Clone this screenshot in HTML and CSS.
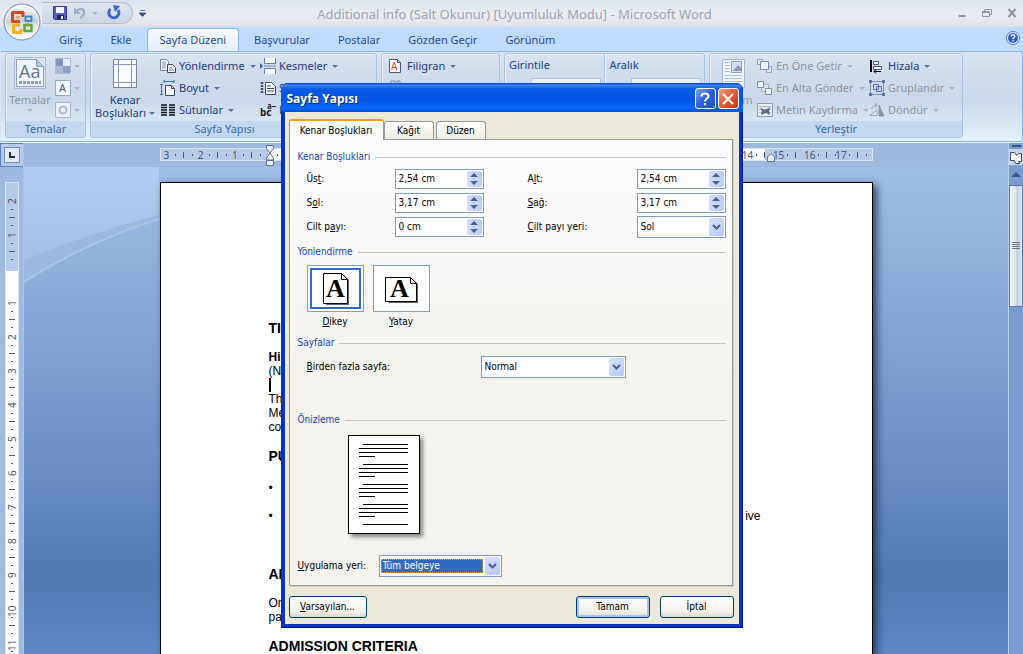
FILE: index.html
```html
<!DOCTYPE html>
<html lang="tr">
<head>
<meta charset="utf-8">
<title>Additional info - Microsoft Word</title>
<link rel="stylesheet" href="styles.css">
</head>
<body>
<div class="app">
  <header class="titlebar">
    <button class="orb" aria-label="Office">
      <svg viewBox="0 0 38 38" width="38" height="38">
        <defs>
          <linearGradient id="orbFill" x1="0" y1="0" x2="0" y2="1"><stop offset="0" stop-color="#fdfdfd"/><stop offset=".5" stop-color="#c9ced8"/><stop offset=".55" stop-color="#d9dde4"/><stop offset="1" stop-color="#fff"/></linearGradient>
        </defs>
        <circle cx="19" cy="19" r="18" fill="url(#orbFill)" stroke="#7e8ba3"/>
        <circle cx="19" cy="19" r="16.5" fill="none" stroke="#fff" opacity=".8"/>
        <g fill="none" stroke-linejoin="round">
          <path d="M17 18.500H9.500V9.500H20V14" stroke="#d8461b" stroke-width="3"/>
          <path d="M22.500 13.500h6v4.500h-6z" stroke="#3a8bd0" stroke-width="2"/>
          <path d="M17 22h-6.500v7.500H18V26" stroke="#f2b21c" stroke-width="3"/>
          <path d="M21.500 22h7v6h-7z" stroke="#5fa63a" stroke-width="2.500"/>
        </g>
        <path d="M15 14v5M12.500 14h5M25 20v4" stroke="#e9872f" stroke-width="1"/>
      </svg>
    </button>
    <div class="quick">
      <button class="tool" aria-label="Kaydet"><svg viewBox="0 0 16 16" width="16" height="16"><path d="M1.500 1.500h13v13h-12l-1-1z" fill="#5a5fc4" stroke="#30358c"/><path d="M4 2h8v6H4z" fill="#f4f6ff"/><path d="M5 10h7v4H5z" fill="#20265e"/><path d="M9 11h2v3H9z" fill="#fff"/></svg></button>
      <button class="tool" aria-label="Geri Al"><svg viewBox="0 0 16 16" width="16" height="16"><path d="M4 6.500C8 2 12.500 4 12 8c0 2-2 4-4 5" fill="none" stroke="#a3b0ca" stroke-width="2.500"/><path d="M2 2v7h7z" fill="#a3b0ca"/></svg></button>
      <i class="caret dim"></i>
      <button class="tool redo" aria-label="Yinele"><svg viewBox="0 0 16 16" width="16" height="16"><path d="M4.500 4A5 5 0 1 0 12 5" fill="none" stroke="#3b67c5" stroke-width="3"/><path d="M7 0l7 1-5 6z" fill="#3b67c5"/></svg></button>
    </div>
    <button class="more" aria-label="Özelleştir"><svg viewBox="0 0 7 7" width="7" height="7"><path d="M1 .5h5M0 3h7L3.500 6.500z" stroke="#3b4f86" fill="#3b4f86" stroke-width=".8"/></svg></button>
    <h1 class="doc-title">Additional info (Salt Okunur) [Uyumluluk Modu] - Microsoft Word</h1>
    <div class="window-buttons">
      <button aria-label="Simge durumuna küçült"><svg viewBox="0 0 10 10" width="10" height="10"><path d="M1.500 8h7" stroke="#8f949e" stroke-width="2"/></svg></button>
      <button aria-label="Önceki boyut"><svg viewBox="0 0 10 10" width="10" height="10"><path d="M2.500 3V1.500h7v5H8M.5 3.500h7v5h-7zM.5 4.500h7" stroke="#8f949e" fill="none"/></svg></button>
      <button aria-label="Kapat"><svg viewBox="0 0 10 10" width="10" height="10"><path d="M1.500 1l7 8M8.500 1l-7 8" stroke="#8f949e" stroke-width="2"/></svg></button>
    </div>
  </header>

  <nav class="tabs">
    <button class="tab">Giriş</button>
    <button class="tab">Ekle</button>
    <button class="tab active">Sayfa Düzeni</button>
    <button class="tab">Başvurular</button>
    <button class="tab">Postalar</button>
    <button class="tab">Gözden Geçir</button>
    <button class="tab">Görünüm</button>
    <button class="help" aria-label="Yardım"><svg viewBox="0 0 14 14" width="14" height="14"><circle cx="7" cy="7" r="6.500" fill="#e8f1ff" stroke="#4a78c8"/><circle cx="7" cy="7" r="5" fill="#2c62c9"/><path d="M5.200 5.500c0-2.300 3.600-2.200 3.600-.2C8.800 6.600 7 6.600 7 8.300M7 9.300v1.300" stroke="#fff" stroke-width="1.400" fill="none"/></svg></button>
  </nav>

  <div class="ribbon">
    <section class="group g-themes">
      <div class="tools">
        <button class="big dim">
          <svg viewBox="0 0 32 32" width="32" height="32"><path d="M.5.500h31v31H.5z" fill="#d9e4f2" stroke="#a9bcd6"/><path d="M2.500 2.500h20l7 7v20h-27z" fill="#f1f6fc" stroke="#8ba3c5"/><path d="M22.500 2.500v7h7z" fill="#b3c4dc" stroke="#8ba3c5"/><text x="5" y="21" class="serif-glyph" font-size="18">Aa</text><path d="M5 25.500h22" stroke="#8c9dba" stroke-width="3" stroke-dasharray="3 1"/></svg>
          <span>Temalar</span><i class="caret"></i>
        </button>
        <div class="stack mini">
          <button class="row dim" aria-label="Renkler"><svg viewBox="0 0 16 16" width="16" height="16"><path d="M0 0h16v16H0z" fill="#a9bbd8"/><path d="M1 1h7v7H1z" fill="#7f93bc"/><path d="M8 1h7v7H8z" fill="#e8effa"/><path d="M8 8h7v7H8z" fill="#8b9fc4"/></svg><i class="caret"></i></button>
          <button class="row dim" aria-label="Yazı Tipleri"><svg viewBox="0 0 16 16" width="16" height="16"><path d="M.5.500h15v15H.5z" fill="#f3f7fc" stroke="#95a9ca"/><text x="4" y="12" font-size="11" fill="#4c5974">A</text></svg><i class="caret"></i></button>
          <button class="row dim" aria-label="Efektler"><svg viewBox="0 0 16 16" width="16" height="16"><path d="M.5.500h15v15H.5z" fill="#edf2f9" stroke="#a5b7d2"/><circle cx="8" cy="8" r="3.500" fill="#e9eef6" stroke="#aebbd3" stroke-width="2"/></svg><i class="caret"></i></button>
        </div>
      </div>
      <h2>Temalar</h2>
    </section>

    <section class="group g-page launcher">
      <div class="tools">
        <button class="big">
          <svg viewBox="0 0 32 32" width="32" height="32"><path d="M4.500 2.500h23v28h-23z" fill="#f9fbff" stroke="#7083a5"/><path d="M9.500 3v27M22.500 3v27M5 7.500h22M5 25.500h22" stroke="#8c98b1" fill="none"/></svg>
          <span>Kenar</span><span>Boşlukları <i class="caret"></i></span>
        </button>
        <div class="stack col-a">
          <button class="row"><svg viewBox="0 0 16 16" width="16" height="16"><path d="M.5 1.500h6l2 2v9h-8z" fill="#f5f7fb" stroke="#75829b"/><path d="M2 4h4M2 6h4M2 8h4M2 10h4" stroke="#8c97ab"/><path d="M7.500 6.500h5l3 3v5h-8z" fill="#fff" stroke="#3a4765"/><path d="M9 10h4M9 12h5" stroke="#75829b"/></svg>Yönlendirme<i class="caret"></i></button>
          <button class="row"><svg viewBox="0 0 16 16" width="16" height="16"><path d="M4 1.500h10M4 0v3M14 0v3M1.500 4v11M0 4.500h3M0 14.500h3" stroke="#3d68b4"/><path d="M5.500 5.500h6l3 3v7h-9z" fill="#fff" stroke="#3a4765"/><path d="M11.500 5.500v3h3" fill="none" stroke="#3a4765"/></svg>Boyut<i class="caret"></i></button>
          <button class="row"><svg viewBox="0 0 16 16" width="16" height="16"><path d="M1 3h6M1 5.500h6M1 8h6M1 10.500h6M1 13h6M9 3h6M9 5.500h6M9 8h6M9 10.500h6M9 13h6" stroke="#10131c" stroke-width="1.500"/></svg>Sütunlar<i class="caret"></i></button>
        </div>
        <div class="stack col-b">
          <button class="row"><svg viewBox="0 0 16 16" width="16" height="16"><path d="M4.500 0v5.500h11V0M4.500 16v-5.500h11V16" fill="#fff" stroke="#6a7a98"/><path d="M4 8h12" stroke="#7b88a2"/><path d="M0 5v6l3-3z" fill="#2f62b6"/></svg>Kesmeler<i class="caret"></i></button>
          <button class="row"><svg viewBox="0 0 16 16" width="16" height="16"><path d="M2 2v12" stroke="#3d4a68" stroke-width="2.500" stroke-dasharray="2 1"/><path d="M5.500 2.500h6l4 4v8h-10z" fill="#fff" stroke="#3a4765"/><path d="M7 6h4M7 8.500h7M7 11h7" stroke="#3a4765"/></svg>S</button>
          <button class="row"><svg viewBox="0 0 16 16" width="16" height="16"><text x="0" y="14" font-size="10" class="bold-glyph">bc</text><text x="7" y="7" font-size="8" class="bold-glyph">a</text><path d="M12 4.500h4" stroke="#222"/></svg>H</button>
        </div>
      </div>
      <h2>Sayfa Yapısı</h2>
    </section>

    <section class="group g-back">
      <div class="tools">
        <div class="stack">
          <button class="row wide"><svg viewBox="0 0 16 16" width="16" height="16"><path d="M1.500 1.500h8l3 3v10h-11z" fill="#fff" stroke="#4c5873"/><path d="M9.500 1.500v3h3" fill="none" stroke="#4c5873"/><text x="3" y="12" font-size="10" fill="#d43a32">A</text></svg>Filigran<i class="caret"></i></button>
          <button class="row wide" aria-label="Sayfa Rengi"><svg viewBox="0 0 16 16" width="16" height="16"><path d="M3 1h4v4H3zM9 1h3v5H9z" fill="none" stroke="#7d879b"/></svg></button>
        </div>
      </div>
      <h2></h2>
    </section>

    <section class="group g-para">
      <div class="tools">
        <div class="measure"><span>Girintile</span><input aria-label="Girintile"></div>
        <div class="measure split"><span>Aralık</span><input aria-label="Aralık"></div>
      </div>
      <h2></h2>
    </section>

    <section class="group g-arrange">
      <div class="tools">
        <button class="big dim">
          <svg viewBox="0 0 32 32" width="32" height="32"><path d="M4.500 2.500h22v28h-22z" fill="#f0f5fb" stroke="#a6b7d0"/><path d="M7 5.500h5M7 8.500h5M7 11.500h5M7 14.500h5M7 18.500h17M7 21.500h17M7 24.500h17" stroke="#b1bfd5"/><path d="M13.500 4.500h10v11h-10z" fill="#d6e1f0" stroke="#8ea1c1"/><path d="M15 14l5-6 3 3v3z" fill="#8497b9"/></svg>
          <span>Konum</span>
        </button>
        <div class="stack col-c">
          <button class="row dim"><svg viewBox="0 0 16 16" width="16" height="16"><path d="M.5 1.500h5v5h-5zM9.500 8.500h5v6h-5z" fill="#dfe6f0" stroke="#98a4ba"/><path d="M3.500 3.500h8v8h-8z" fill="#f0f4fa" stroke="#7e8ba5"/></svg>En Öne Getir<i class="caret"></i></button>
          <button class="row dim"><svg viewBox="0 0 16 16" width="16" height="16"><path d="M4.500 4.500h7v7h-7z" fill="#dfe6f0" stroke="#a3aec2"/><path d="M.5 1.500h6v6h-6zM8.500 8.500h6v6h-6z" fill="#f0f4fa" stroke="#7e8ba5"/></svg>En Alta Gönder<i class="caret"></i></button>
          <button class="row dim"><svg viewBox="0 0 16 16" width="16" height="16"><path d="M.5 1.500h15v13H.5z" fill="#e9eff7" stroke="#8f9bb2"/><path d="M2 4.500h12M2 7.500h12M2 10.500h12" stroke="#a9b5c9"/><path d="M3 5l4 3 3-1 3-2-1 4 1 4-4-2-5 2 1-4z" fill="#5b6a86"/></svg>Metin Kaydırma<i class="caret"></i></button>
        </div>
        <div class="stack">
          <button class="row"><svg viewBox="0 0 16 16" width="16" height="16"><path d="M2 2v12" stroke="#000" stroke-width="2"/><path d="M4.500 3.500h5v3h-5zM4.500 8.500h8v3h-8z" fill="#fff" stroke="#4a5570"/><path d="M12 13.500H5M7 11.500l-2 2 2 2" stroke="#000" fill="none"/></svg>Hizala<i class="caret"></i></button>
          <button class="row dim"><svg viewBox="0 0 16 16" width="16" height="16"><path d="M1.500 1.500h13v13h-13z" fill="none" stroke="#8493b0"/><path d="M4.500 4.500h5v5h-5zM7.500 6.500h5v5h-5z" fill="none" stroke="#5d74a3"/><path d="M0 0h3v3H0zM13 0h3v3h-3zM0 13h3v3H0zM13 13h3v3h-3z" fill="#5d74a3"/></svg>Gruplandır<i class="caret"></i></button>
          <button class="row dim"><svg viewBox="0 0 16 16" width="16" height="16"><path d="M1 13.500h7V8z" fill="#e4eaf3" stroke="#97a4bc"/><path d="M10 3v11h5z" fill="#8b98b0" stroke="#8b98b0"/><path d="M3 7c0-3 1-4 5-4M6 1l2 2-2 2" fill="none" stroke="#8b98b0"/></svg>Döndür<i class="caret"></i></button>
        </div>
      </div>
      <h2>Yerleştir</h2>
    </section>
  </div>

  <main class="workspace">
    <aside class="left-rail">
      <button class="tab-stop" aria-label="Sekme"><svg viewBox="0 0 16 16" width="16" height="16"><path d="M.5.500h15v15H.5z" fill="#e3edfa" stroke="#6d8cc0"/><path d="M6 5v5h5" fill="none" stroke="#1d2f5c" stroke-width="2"/></svg></button>
      <ol class="v-ruler">
        <li>2</li><li>1</li><li></li><li>1</li><li>2</li><li>3</li><li>4</li><li>5</li><li>6</li><li>7</li><li>8</li><li>9</li><li>10</li><li>11</li>
      </ol>
    </aside>

    <div class="center">
      <div class="h-band">
        <ol class="h-ruler">
          <li>3</li><li>2</li><li>1</li><li class="origin"><svg viewBox="0 0 10 22" width="10" height="22"><path d="M1.500.500h7v3L5 8 1.500 3.500zM5 8l3.500 5v2h-7v-2zM1.500 15.500h7v5h-7z" fill="#e9f1fc" stroke="#5c6f94"/></svg></li><li></li><li></li><li></li><li></li><li></li><li></li><li></li><li></li><li></li><li></li><li></li><li></li><li></li><li class="edge">14<svg viewBox="0 0 10 10" width="10" height="10"><path d="M1.500 9.500V5L5 1.500 8.500 5v4.500z" fill="#e9f1fc" stroke="#5c6f94"/></svg></li><li>15</li><li>16</li><li>17</li>
        </ol>
      </div>
      <div class="canvas">
        <svg class="swoosh" viewBox="0 0 135 120" width="135" height="120" preserveAspectRatio="none">
          <defs>
            <linearGradient id="sky" x1="0" y1="0" x2="0" y2="1"><stop offset="0" stop-color="#b1cef0"/><stop offset="1" stop-color="#a2c0e8"/></linearGradient>
          </defs>
          <path d="M0 0h135v48Q60 68 0 94z" fill="url(#sky)"/>
          <path d="M0 94Q60 68 135 48v4Q60 76 0 115z" fill="#9bbae2"/>
          <path d="M0 115Q60 76 135 52" fill="none" stroke="#a9c5eb" stroke-width="2"/>
        </svg>
        <article class="page">
          <h3>TI</h3>
          <p class="gap-l"><b>Hi</b><br>(N</p>
          <div class="cursor"></div>
          <p>Th<br>Me<br>co</p>
          <h3 class="gap-l">PU</h3>
          <ul>
            <li><span></span></li>
            <li><span>ive</span></li>
          </ul>
          <h3>AI</h3>
          <p class="gap-l">On<br>pa</p>
          <h3 class="gap-l">ADMISSION CRITERIA</h3>
        </article>
      </div>
    </div>

    <aside class="scroll-rail">
      <div class="splitter"></div>
      <button class="view-ruler" aria-label="Cetvel"><svg viewBox="0 0 14 14" width="14" height="14"><path d="M1.500 2.500h4l2 3 2-2h3v8h-3l1 2h-4l-1-3h-4z" fill="#fff" stroke="#3c4660"/></svg></button>
      <button class="scroll-up" aria-label="Yukarı"><svg viewBox="0 0 10 6" width="10" height="6"><path d="M0 5l5-5 5 5z" fill="#3b568f"/></svg></button>
      <div class="thumb"><svg viewBox="0 0 8 8" width="8" height="8"><path d="M0 .5h8M0 2.500h8M0 4.500h8M0 6.500h8" stroke="#6b7a93"/></svg></div>
    </aside>
  </main>
</div>

<div class="dialog" role="dialog" aria-labelledby="dlg-title">
  <div class="dlg-title">
    <h2 id="dlg-title">Sayfa Yapısı</h2>
    <button class="cap-btn" aria-label="Yardım"><svg viewBox="0 0 14 14" width="14" height="14"><path d="M3.500 4.500C3.500.500 10.500.800 10.500 4.200 10.500 6.500 7 6.500 7 9.500M7 11v2.300" fill="none" stroke="#fff" stroke-width="2"/></svg></button>
    <button class="cap-btn close" aria-label="Kapat"><svg viewBox="0 0 14 14" width="14" height="14"><path d="M2 2l10 10M12 2L2 12" stroke="#fff" stroke-width="2.200"/></svg></button>
  </div>
  <form class="dlg-body">
    <div class="dlg-tabs">
      <button type="button" class="dlg-tab on">Kenar Boşlukları</button>
      <button type="button" class="dlg-tab">Kağıt</button>
      <button type="button" class="dlg-tab">Düzen</button>
    </div>
    <div class="panel">
      <h3 class="legend">Kenar Boşlukları</h3>
      <div class="fields">
        <label for="ust">Üs<u>t</u>:</label>
        <div class="spin"><input id="ust" value="2,54 cm"><span class="arrows"><button type="button" aria-label="Artır"></button><button type="button" class="down" aria-label="Azalt"></button></span></div>
        <label for="alt">A<u>l</u>t:</label>
        <div class="spin"><input id="alt" value="2,54 cm"><span class="arrows"><button type="button" aria-label="Artır"></button><button type="button" class="down" aria-label="Azalt"></button></span></div>
        <label for="sol">S<u>o</u>l:</label>
        <div class="spin"><input id="sol" value="3,17 cm"><span class="arrows"><button type="button" aria-label="Artır"></button><button type="button" class="down" aria-label="Azalt"></button></span></div>
        <label for="sag"><u>S</u>ağ:</label>
        <div class="spin"><input id="sag" value="3,17 cm"><span class="arrows"><button type="button" aria-label="Artır"></button><button type="button" class="down" aria-label="Azalt"></button></span></div>
        <label for="cilt">Cilt p<u>a</u>yı:</label>
        <div class="spin"><input id="cilt" value="0 cm"><span class="arrows"><button type="button" aria-label="Artır"></button><button type="button" class="down" aria-label="Azalt"></button></span></div>
        <label for="yer"><u>C</u>ilt payı yeri:</label>
        <div class="combo"><select id="yer"><option>Sol</option></select><span class="drop"><svg viewBox="0 0 9 6" width="9" height="6"><path d="M1 1l3.500 3.500L8 1" fill="none" stroke="#4d6185" stroke-width="2"/></svg></span></div>
      </div>

      <h3 class="legend">Yönlendirme</h3>
      <div class="orient">
        <button type="button" class="choice picked">
          <span class="frame"><svg viewBox="0 0 32 34" width="32" height="34"><path d="M7 3h18l5 5v25H7z" fill="#666"/><path d="M4.500 1.500h18l6 6v24h-24z" fill="#fff" stroke="#000"/><path d="M22.500 1.500v6h6" fill="none" stroke="#000"/><text x="7" y="25" font-size="26" class="letter">A</text></svg></span>
          <span><u>D</u>ikey</span>
        </button>
        <button type="button" class="choice">
          <span class="frame"><svg viewBox="0 0 34 34" width="34" height="34"><path d="M4 7h25l5 5v19H4z" fill="#666"/><path d="M1.500 5.500h25l6 6v18h-31z" fill="#fff" stroke="#000"/><path d="M26.500 5.500v6h6" fill="none" stroke="#000"/><text x="6" y="25" font-size="26" class="letter">A</text></svg></span>
          <span><u>Y</u>atay</span>
        </button>
      </div>

      <h3 class="legend">Sayfalar</h3>
      <div class="multi">
        <label for="multi"><u>B</u>irden fazla sayfa:</label>
        <div class="combo"><select id="multi"><option>Normal</option></select><span class="drop"><svg viewBox="0 0 9 6" width="9" height="6"><path d="M1 1l3.500 3.500L8 1" fill="none" stroke="#4d6185" stroke-width="2"/></svg></span></div>
      </div>

      <h3 class="legend">Önizleme</h3>
      <div class="preview">
        <svg viewBox="0 0 70 97" width="70" height="97"><path d="M14 8.500h45M10 12.500h49M10 16.500h49M10 20.500h16M14 28.500h45M10 32.500h49M10 36.500h49M10 40.500h16M14 48.500h45M10 52.500h49M10 56.500h49M10 60.500h16M14 68.500h45M10 72.500h49M10 76.500h49M10 80.500h16M14 88.500h45" stroke="#000"/></svg>
      </div>
      <div class="apply">
        <label for="apply"><u>U</u>ygulama yeri:</label>
        <div class="combo focused"><select id="apply"><option>Tüm belgeye</option></select><span class="drop"><svg viewBox="0 0 9 6" width="9" height="6"><path d="M1 1l3.500 3.500L8 1" fill="none" stroke="#4d6185" stroke-width="2"/></svg></span></div>
      </div>
    </div>
    <div class="dlg-foot">
      <button type="button" class="btn first"><u>V</u>arsayılan...</button>
      <button type="button" class="btn default">Tamam</button>
      <button type="button" class="btn">İptal</button>
    </div>
  </form>
</div>
</body>
</html>
```
FILE: styles.css
```css
* { box-sizing: border-box; }
body, h1, h2, h3, p, ul, ol { margin: 0; padding: 0; }
ol, ul { list-style: none; }
button, input, select { font: inherit; color: inherit; margin: 0; padding: 0; border: 0; background: none; }
svg { display: block; flex: none; }
body { overflow: hidden; font: 11px/14px "Noto Sans", "Open Sans", sans-serif; color: #15428b; }
.app { display: flex; flex-direction: column; height: 100vh; background: #bfdbff; }

/* Title bar */
.titlebar { position: relative; display: flex; align-items: center; height: 27px; padding: 0 6px 0 42px; background: linear-gradient(#dde4ee, #e9edf3 50%, #e1e5eb); border-bottom: 1px solid #d3deec; }
.orb { position: absolute; left: 3px; top: 3px; z-index: 2; }
.quick { display: flex; align-items: center; gap: 4px; height: 22px; padding: 0 10px; border: 1px solid #b3bfd1; border-left: 0; border-radius: 0 11px 11px 0; background: linear-gradient(#dfe7f2, #ccd6e4); }
.quick .redo { margin-left: 4px; }
.more { margin-left: 6px; }
.doc-title { flex: 1; text-align: center; font-weight: 400; font-size: 13px; line-height: 16px; color: #a0a4ab; padding: 2px 74px 0 0; white-space: nowrap; }
.window-buttons { display: flex; gap: 15px; }
.caret { display: inline-block; flex: none; width: 0; height: 0; border: 3px solid transparent; border-top-color: #5b6f9c; border-bottom: 0; }
.dim .caret, .caret.dim { border-top-color: #a9b3c5; }

/* Ribbon tabs */
.tabs { display: flex; align-items: flex-end; gap: 2px; height: 24px; padding: 0 3px 0 46px; background: #bfdbff; }
.tab { height: 23px; padding: 0 12px; color: #2b4a8c; border: 1px solid transparent; border-bottom: 0; }
.tab.active { background: linear-gradient(#f7fbff, #e3edf9); border-color: #8fb6e6; border-radius: 4px 4px 0 0; }
.help { margin: 0 0 6px auto; }

/* Ribbon */
.ribbon { display: flex; gap: 4px; height: 91px; padding: 1px 3px 3px 4px; border: 1px solid #8db2e3; border-left-color: #d7e6f8; border-radius: 3px; background: linear-gradient(#dbe6f4, #cfdded 20%, #c9d9ed 55%, #e2f3fc); box-shadow: 0 1px #e9fbff; }
.group { flex: none; display: flex; flex-direction: column; border: 1px solid #a9c3e2; border-radius: 3px; box-shadow: inset 1px 1px #e9f1fa; overflow: hidden; }
.g-themes { width: 81px; }
.g-page { width: 287px; }
.g-back { width: 119px; }
.g-para { width: 201px; }
.g-arrange { width: 254px; }
.group h2 { height: 16px; background: #c1d8f0; font-weight: 400; font-size: 11px; line-height: 16px; text-align: center; color: #3e6aaa; }
.launcher h2 { padding-right: 18px; }
.tools { flex: 1; display: flex; min-height: 0; padding-left: 3px; }
.big { display: flex; flex-direction: column; align-items: center; width: 42px; padding-top: 3px; line-height: 13px; color: #1e3a7a; }
.big svg { margin-bottom: 4px; }
.big span { white-space: nowrap; }
.big .caret { margin: 3px 0 0; }
.big span .caret { margin: 0; vertical-align: 2px; }
.big.dim { color: #8d93a1; }
.g-page .big { width: 62px; }
.stack { display: flex; flex-direction: column; padding-top: 1px; }
.row { display: flex; align-items: center; gap: 3px; height: 22px; color: #1e3a7a; white-space: nowrap; }
.row.dim { color: #8d93a1; }
.row .caret { margin-left: 2px; }
.mini { padding-left: 4px; }
.mini .row { gap: 1px; }
.col-a, .col-c { flex: none; }
.col-a { width: 98px; padding-left: 4px; }
.col-b { padding-left: 6px; }
.col-c { width: 114px; padding-left: 2px; }
.wide { gap: 3px; padding-left: 3px; }
.measure { display: flex; flex-direction: column; flex: 1; padding: 4px 3px 0 1px; }
.measure input { align-self: flex-end; width: 70px; height: 18px; margin-top: 6px; background: #eaf2fb; border: 1px solid #a9c1de; }
.measure.split { box-shadow: inset 1px 0 #a9c3e2, inset 2px 0 #eef5fc; padding-left: 6px; }
.serif-glyph { font-family: "Open Sans", sans-serif; fill: #66748d; }
.bold-glyph { font-weight: 700; fill: #222; }

/* Workspace */
.workspace { flex: 1; display: flex; min-height: 0; margin-top: 1px; background: #9ebae1; }
.left-rail { flex: none; width: 24px; overflow: hidden; background: #9ebae1; border-right: 1px solid #a9c4ea; }
.tab-stop { display: grid; place-items: center; width: 24px; height: 24px; border: 1px solid #5d80bd; background: #b3cbec; margin-bottom: 15px; }
.v-ruler { width: 14px; margin-left: 5px; padding-top: 11px; border: solid #d7e5f7; border-width: 1px 1px 0; background: linear-gradient(#b5cbea 88px, #fff 88px); }
.v-ruler li { display: flex; height: 34px; padding-bottom: 4px; writing-mode: vertical-rl; transform: rotate(180deg); justify-content: flex-end; font-size: 10px; line-height: 12px; color: #4c566c;
  background: linear-gradient(#4c566c, #4c566c) 5px 18px / 2px 1px no-repeat, linear-gradient(#4c566c, #4c566c) 3px 10px / 6px 1px no-repeat, linear-gradient(#4c566c, #4c566c) 5px 2px / 2px 1px no-repeat; }
.center { flex: 1; display: flex; flex-direction: column; min-width: 0; }
.h-band { flex: none; height: 24px; padding-top: 5px; background: #9ebae1; }
.h-ruler { display: flex; width: 713px; max-width: 100%; height: 13px; margin: 0 auto; padding-right: 5px; border: 1px solid #d7e5f7; background: linear-gradient(90deg, #b5cbea 15%, #fff 15%, #fff 85%, #b5cbea 85%); }
.h-ruler li { position: relative; flex: 1; padding-left: 3px; font-size: 10px; line-height: 12px; color: #4c566c;
  background: linear-gradient(#4c566c, #4c566c) 14px 5px / 1px 2px no-repeat, linear-gradient(#4c566c, #4c566c) 22px 3px / 1px 6px no-repeat, linear-gradient(#4c566c, #4c566c) 31px 5px / 1px 2px no-repeat; }
.h-ruler li:nth-child(n+18) { padding-left: 0; }
.h-ruler li svg { position: absolute; top: -4px; left: 2px; }
.h-ruler li.edge svg { top: 3px; left: 24px; }
.canvas { position: relative; flex: 1; min-height: 0; overflow: hidden; padding-top: 15px; background: linear-gradient(#9ebfe9, #8fb0dd 20%, #7498c9 50%, #6188bd 70%, #507ab0 84%, #5d8ac4); }
.swoosh { position: absolute; left: 0; top: 0; }
.page { position: relative; width: 713px; max-width: 100%; height: 100%; margin: 0 auto; padding: 137px 107px 0 108px; background: #fff; border: 1px solid #000; border-bottom: 0; box-shadow: 4px 3px 8px rgba(20, 40, 80, .8); overflow: hidden; font: 12px/14px "Liberation Sans", Arial, sans-serif; color: #000; }
.page h3 { font-size: 14px; line-height: 16px; }
.page .gap-l { margin-top: 14px; }
.cursor { width: 2px; height: 14px; background: #000; }
.page ul { margin: 17px 0 43px; }
.page ul li { display: flex; height: 14px; margin-bottom: 14px; }
.page ul li::before { content: "•"; }
.page ul span { margin-left: auto; padding-right: 4px; }

/* Scroll bar */
.scroll-rail { flex: none; width: 15px; display: flex; flex-direction: column; align-items: center; background: #7a9bcd; border-left: 1px solid #b4cef0; }
.splitter { width: 9px; height: 2px; margin: 2px 0; background: #35508a; }
.view-ruler { display: grid; place-items: center; width: 14px; height: 16px; background: #c9d6ea; }
.scroll-up { display: grid; place-items: center; width: 14px; height: 20px; }
.thumb { display: grid; place-items: center; width: 14px; height: 122px; border: 1px solid #5b77a8; background: linear-gradient(90deg, #f5f8fc, #dbe5ef 45%, #bccbdc 60%, #e6edf5); }

/* Dialog */
.dialog { position: absolute; top: 83px; left: 50%; width: 462px; margin-left: -231px; display: flex; flex-direction: column; padding: 0 4px 4px; background: #0a35c0; border-radius: 7px 7px 0 0; box-shadow: inset 1px 0 #0a2ab0, inset -1px -1px #00138c; font: 10px/14px "DejaVu Sans Condensed", "DejaVu Sans", sans-serif; color: #000; }
.dlg-title { display: flex; align-items: center; gap: 2px; height: 29px; margin: 0 -4px; padding: 2px 4px 0 6px; border-radius: 7px 7px 0 0; background: linear-gradient(#0a3ec8, #3a86f8 8%, #0a5ae6 20%, #0455e4 60%, #0568ff 85%, #0450d8); }
.dlg-title h2 { flex: 1; font: bold 12px/16px "Open Sans", sans-serif; color: #fff; text-shadow: 1px 1px #0a2a80; }
.cap-btn { display: grid; place-items: center; width: 21px; height: 21px; border: 1px solid #fff; border-radius: 3px; background: linear-gradient(135deg, #7ba4f5, #2a5fe0 50%, #2050cc); }
.cap-btn.close { background: linear-gradient(135deg, #f0a083, #dd5a34 50%, #c33c12); }
.dlg-body { padding: 7px 6px 6px 4px; background: #ece9d8; }
.dlg-tabs { display: flex; align-items: flex-end; gap: 2px; height: 20px; }
.dlg-tab { height: 18px; padding: 0 9px; min-width: 50px; border: 1px solid #919b9c; border-bottom: 0; border-radius: 3px 3px 0 0; background: linear-gradient(#fff, #ecebe3); }
.dlg-tab.on { height: 21px; width: 95px; padding: 0; margin: 0 -2px -1px 0; border-top: 2px solid #f59b1c; background: #fcfcfe; z-index: 1; }
.panel { padding: 10px 6px 8px 8px; border: 1px solid #919b9c; background: linear-gradient(#fcfcfe, #f4f3ee 55%); box-shadow: 1px 1px #d4d0bf; }
.legend { display: flex; align-items: center; gap: 5px; font-size: 10px; line-height: 14px; font-weight: 400; color: #2045c0; }
.legend::after { content: ""; flex: 1; height: 1px; background: #c6c6bf; }
.fields { display: grid; grid-template-columns: 88px 89px 1fr 89px; grid-auto-rows: 22px; row-gap: 2px; align-items: center; margin: 4px 0 7px; padding-left: 9px; }
.fields label:nth-of-type(even) { padding-left: 44px; }
.spin, .combo { display: flex; border: 1px solid #7f9db9; background: #fff; padding: 1px; }
.spin { height: 20px; }
.combo { height: 22px; }
.spin input, .combo select { flex: 1; min-width: 0; padding-left: 2px; appearance: none; }
.arrows { display: flex; flex-direction: column; width: 15px; border-radius: 2px; background: linear-gradient(90deg, #cfddfd, #b9cdf9); }
.arrows button { flex: 1; display: grid; place-items: center; }
.arrows button::before { content: ""; border: 4px solid transparent; border-top: 0; border-bottom: 4px solid #4d6185; }
.arrows .down::before { border: 4px solid transparent; border-bottom: 0; border-top: 4px solid #4d6185; }
.drop { display: grid; place-items: center; width: 15px; border-radius: 2px; background: linear-gradient(135deg, #d5e2ff, #b4c9f8); }
.orient { display: flex; gap: 9px; margin: 6px 0 7px; padding-left: 9px; }
.choice { display: flex; flex-direction: column; align-items: center; gap: 3px; width: 57px; }
.frame { display: grid; place-items: center; width: 57px; height: 47px; border: 1px solid #7f9db9; background: #fff; }
.picked .frame { box-shadow: inset 0 0 0 2px #fff, inset 0 0 0 4px #316ac5; }
.letter { font-family: "Liberation Serif", serif; font-weight: 700; font-size: 26px; }
.multi { display: grid; grid-template-columns: 174px 145px; align-items: center; margin: 6px 0 35px; padding-left: 9px; }
.preview { width: 72px; margin: 8px 0 21px 50px; border: 1px solid #000; background: #fff; box-shadow: 3px 3px 4px rgba(0, 0, 0, .45); }
.apply { display: grid; grid-template-columns: 81px 123px; align-items: center; }
.focused select { margin: 2px 2px 2px 0; background: #316ac5; color: #fff; outline: 1px dotted #d9a34a; outline-offset: -1px; }
.dlg-foot { display: flex; gap: 10px; padding-top: 10px; margin-right: -1px; }
.btn { width: 74px; height: 22px; border: 1px solid #003c74; border-radius: 3px; background: linear-gradient(#fff, #f3f2ec 70%, #dcd8cc); }
.btn.first { width: 78px; margin-right: auto; }
.btn.default { box-shadow: inset 0 0 0 2px #a9c3f2; }
```
